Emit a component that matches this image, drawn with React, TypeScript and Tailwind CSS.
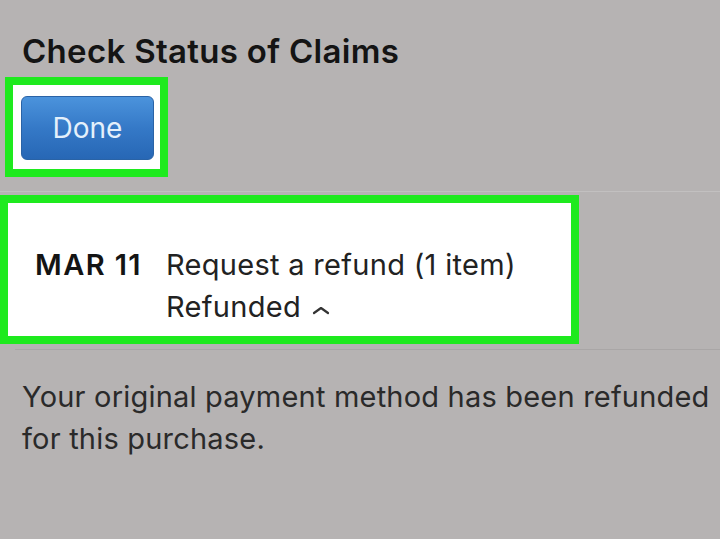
export default function App() {
  return (
    <div className="w-[720px] h-[539px] overflow-hidden bg-[#b6b3b3] font-['Inter','Liberation_Sans',Arial,sans-serif]">
      {/* Header */}
      <h1 className="pl-[22px] pt-[33px] text-[33px] leading-[36px] tracking-[0.3px] font-semibold text-[#141414]">
        Check Status of Claims
      </h1>

      <div className="mt-[8px] ml-[5px] w-fit border-[8px] border-[#1eea1e] bg-white pl-[8px] pr-[6px] pt-[11px] pb-[9px]">
        <button className="flex h-[64px] w-[133px] items-center justify-center rounded-[6px] border border-[#2a63a6] bg-gradient-to-b from-[#4b93dc] via-[#3579c7] to-[#2767b5] text-[28px] text-[#e4f0fb]">
          Done
        </button>
      </div>

      <div className="mt-[14px] h-px bg-[#c2c0c0]" />

      {/* Claim row */}
      <div className="mt-[3px] w-[579px] border-[8px] border-[#1eea1e] bg-white pl-[27px] pt-[41px] pb-[8px]">
        <div className="flex">
          <div className="w-[131px] text-[29px] leading-[42px] font-semibold tracking-[1.4px] text-[#141414]">
            MAR 11
          </div>
          <div className="text-[29px] leading-[42px] tracking-[0.3px] text-[#222]">
            <div>Request a refund (1 item)</div>
            <div className="flex items-center gap-[10px]">
              Refunded
              <svg width="20" height="10" viewBox="0 0 20 10" className="mt-[6px]">
                <path d="M3 8 L10 3 L17 8" fill="none" stroke="#333" strokeWidth="2.2" strokeLinecap="round" strokeLinejoin="round" />
              </svg>
            </div>
          </div>
        </div>
      </div>

      <div className="mt-[5px] ml-[15px] h-px bg-[#a9a6a6]" />

      <p className="pl-[22px] pt-[26px] text-[29px] leading-[42px] tracking-[0.2px] text-[#2a2a2a]">
        Your original payment method has been refunded
        <br />
        for this purchase.
      </p>
    </div>
  );
}
